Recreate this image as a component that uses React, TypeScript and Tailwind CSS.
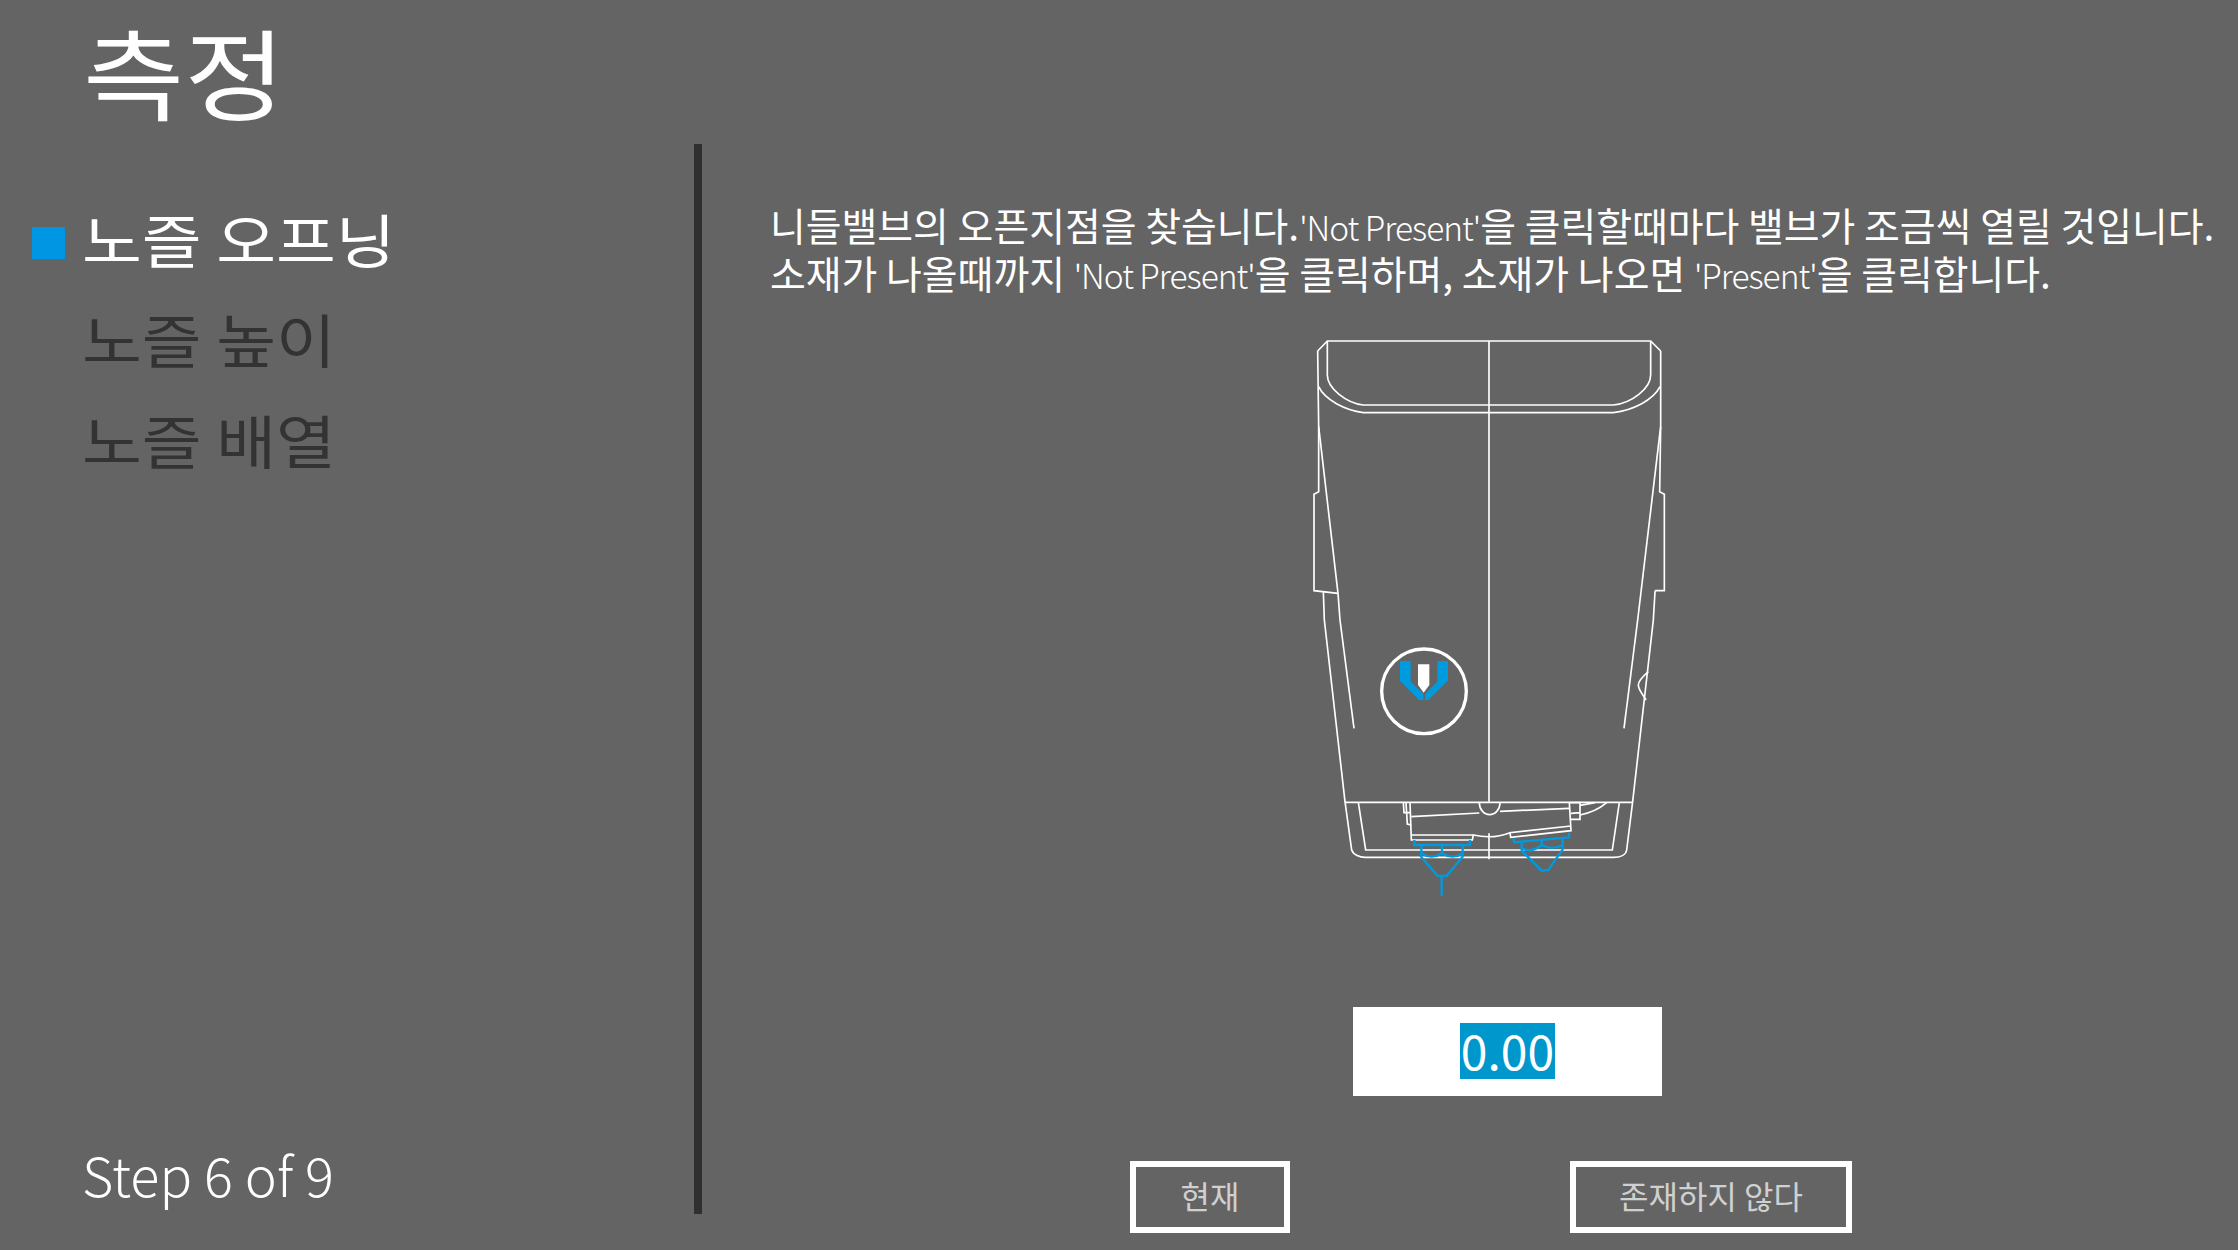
import React from 'react';

const font = { fontFamily: '"Noto Sans CJK KR", "Noto Sans", sans-serif' };

function Printer() {
  return (
    <svg viewBox="0 0 1260 1800" className="block w-[420px] h-[600px]" fill="none" stroke="#fff" strokeWidth="5">
      {/* upper half, coords from top crop */}
      <path d="M143 93L172 63H1142L1172 93" />
      <path d="M143 93L146 320V515L132 523V812L204 820" />
      <path d="M146 320L204 820L210 900" />
      <path d="M160 815L163 900" />
      <path d="M1172 93V320L1169 515L1183 523V812H1157L1155 815L1150 900" />
      <path d="M1172 320L1103 900" />
      <path d="M657 63V1445" />
      <path d="M172 63V165C172 205 230 250 280 255H1030C1085 250 1142 205 1142 165V63" />
      <path d="M146 200C165 240 225 270 280 278H1030C1090 270 1150 240 1170 200" />
      <g transform="translate(0 900)">
        <path d="M163 0L225 545L245 690C250 705 270 712 285 712H1030C1050 712 1068 705 1070 690L1088 545L1150 0" />
        <path d="M210 0L252 325" />
        <path d="M1103 0L1062 325" />
        <path d="M225 547H1088" />
        <path d="M265 547L287 690H1027L1048 547" />
        <path d="M657 640V718" />
        <path d="M1135 155C1120 168 1105 185 1105 195C1105 210 1120 225 1128 240" />
        <circle cx="462" cy="214" r="127" strokeWidth="10" />
        <path d="M390 123H422V185L460 222V240H447L390 182Z" fill="#009ade" stroke="none" />
        <path d="M534 123H502V185L465 222V240H475L534 182Z" fill="#009ade" stroke="none" />
        <path d="M444 133H478V195L461 218L444 195Z" fill="#fff" stroke="none" />
        {/* carriage */}
        <path d="M420 548L424 660H607L610 645H424" />
        <path d="M424 590L628 579M690 574L898 565" />
        <path d="M628 548A31 36 0 0 0 690 548" />
        <path d="M898 548L903 632L722 652L720 638L903 618" />
        <path d="M610 645C650 654 690 650 720 638" />
        <path d="M400 548L402 578H420M408 548L412 612L424 615" />
        <path d="M900 548H930V598H903M903 580L930 578" />
        <path d="M930 556L975 548M930 585C965 578 990 565 1010 548" />
        {/* nozzles */}
        <g stroke="#009ade" strokeWidth="7">
          <path d="M433 660V675H600V660" />
          <path d="M455 675L453 710L503 768H530L578 710V675" />
          <path d="M453 700Q485 720 516 700Q548 720 578 700M516 675V700M515 768V827" />
          <path d="M730 655L733 667L897 652V638" />
          <path d="M755 665V692L815 752L835 750L878 688V652" />
          <path d="M755 685Q785 700 815 675Q845 692 878 675M815 660V680" />
        </g>
      </g>
    </svg>
  );
}

const L = ({ children }: { children: React.ReactNode }) => (
  <span className="font-light text-[33.5px] leading-none tracking-[-1px]">{children}</span>
);

export default function App() {
  return (
    <div className="w-[2238px] h-[1250px] bg-[#646464] flex overflow-hidden" style={font}>
      <div className="w-[694px] shrink-0 flex flex-col">
        <div className="pl-[83px] h-[187px] pt-[9px] text-[110px] leading-[136px] text-white scale-y-90 origin-top">측정</div>
        <div className="flex items-center h-[101px]">
          <div className="w-[33px] h-[32px] ml-[32px] mr-[17px] mt-[11px] bg-[#0096e3]" />
          <div className="text-[65px] leading-[100px] text-white scale-y-90">노즐 오프닝</div>
        </div>
        <div className="pl-[82px] text-[65px] leading-[101px] text-[#333333] scale-y-90">노즐 높이</div>
        <div className="pl-[82px] text-[65px] leading-[101px] text-[#333333] scale-y-90">노즐 배열</div>
        <div className="mt-auto mb-[40px] pl-[82px] text-[54px] leading-[72px] font-light text-white">Step 6 of 9</div>
      </div>
      <div className="w-[8px] shrink-0 mt-[144px] h-[1070px] bg-[#2f2f2f]" />
      <div className="flex-1 flex flex-col">
        <div className="pl-[68px] pt-[200px] text-[38.9px] leading-[48px] text-white whitespace-nowrap">
          <div>니들밸브의 오픈지점을 찾습니다.<L>'Not Present'</L>을 클릭할때마다 밸브가 조금씩 열릴 것입니다.</div>
          <div>소재가 나올때까지 <L>'Not Present'</L>을 클릭하며, 소재가 나오면 <L>'Present'</L>을 클릭합니다.</div>
        </div>
        <div className="ml-[568px] mt-[24px]"><Printer /></div>
        <div className="ml-[651px] mt-[87px] w-[309px] h-[89px] pb-[2px] bg-white flex items-center justify-center">
          <span className="inline-block h-[56px] bg-[#0098cc] text-white text-[48px] leading-[52px] px-[1px]">0.00</span>
        </div>
        <div className="flex mt-[65px] ml-[428px]">
          <div className="w-[160px] h-[72px] pb-[5px] border-[6px] border-white flex items-center justify-center text-[32px] text-[#d0d0d0]">현재</div>
          <div className="w-[282px] h-[72px] pb-[5px] ml-[280px] border-[6px] border-white flex items-center justify-center text-[32px] text-[#d0d0d0]">존재하지 않다</div>
        </div>
      </div>
    </div>
  );
}
